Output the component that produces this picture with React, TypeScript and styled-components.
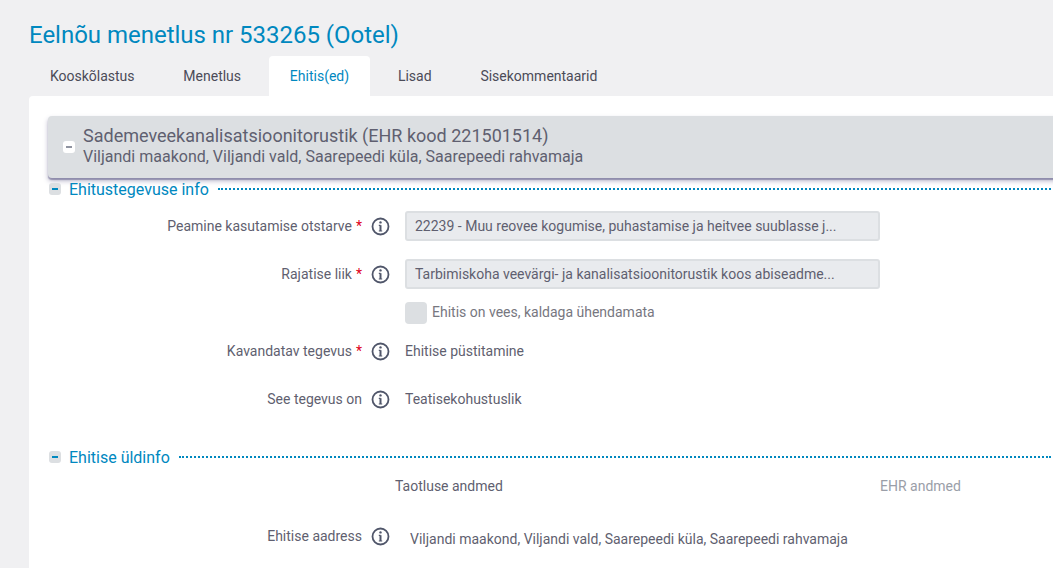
import React from "react";
import styled, { createGlobalStyle } from "styled-components";

const Global = createGlobalStyle`
  html, body { margin: 0; padding: 0; height: 100%; overflow: hidden; background: #f0f0f2; }
  body { font-family: Roboto, "Liberation Sans", sans-serif; color: #5b5b6b; }
`;

const Page = styled.div`
  width: 1053px;
  height: 568px;
  overflow: hidden;
  padding: 20px 0 0 29px;
  box-sizing: border-box;
`;

const Title = styled.h1`
  margin: 0;
  height: 36px;
  font-size: 24px;
  line-height: 30px;
  font-weight: 400;
  color: #0088bf;
  letter-spacing: -0.02px;
`;

const Tabs = styled.nav`
  display: flex;
  gap: 7px;
  height: 40px;
`;

const Tab = styled.div<{ $active?: boolean }>`
  display: flex;
  align-items: center;
  padding: 0 20.9px;
  font-size: 14px;
  border-radius: 4px 4px 0 0;
  color: ${(p) => (p.$active ? "#0088bf" : "#4b4b58")};
  background: ${(p) => (p.$active ? "#fff" : "transparent")};
`;

const Card = styled.main`
  width: 1100px;
  height: 480px;
  background: #fff;
  border-radius: 4px 0 0 0;
  padding: 20px 0 0 19px;
  box-sizing: border-box;
`;

const Panel = styled.header`
  display: flex;
  align-items: center;
  height: 62px;
  gap: 8px;
  padding: 0 0 2px 15px;
  box-sizing: border-box;
  background: #dcdfe2;
  border-radius: 4px 0 0 4px;
  box-shadow: 0 2px 1px rgba(80, 75, 125, 0.45), 0 3px 5px rgba(80, 75, 125, 0.4);
`;

const PanelToggle = styled.span`
  display: flex;
  align-items: center;
  justify-content: center;
  width: 12px;
  height: 12px;
  margin-top: 2px;
  background: #fff;
  border-radius: 3px;
  &::before {
    content: "";
    width: 6px;
    height: 2px;
    background: #8f93a0;
  }
`;

const PanelText = styled.div`
  display: flex;
  flex-direction: column;
`;

const PanelTitle = styled.div`
  font-size: 18px;
  line-height: 22px;
  color: #5f5f70;
`;

const PanelSub = styled.div`
  font-size: 16px;
  line-height: 20px;
  color: #5f5f70;
`;

const Section = styled.div<{ $top: number }>`
  display: flex;
  align-items: center;
  height: 20px;
  width: 1003px;
  margin-top: ${(p) => p.$top}px;
  padding-left: 1px;
  box-sizing: border-box;
`;

const SectionToggle = styled.span`
  display: flex;
  align-items: center;
  justify-content: center;
  width: 12px;
  height: 12px;
  margin-right: 8px;
  background: #dcdfe2;
  border-radius: 3px;
  flex: none;
  &::before {
    content: "";
    width: 6px;
    height: 2px;
    background: #0088bf;
  }
`;

const SectionName = styled.span`
  font-size: 16px;
  color: #0088bf;
  margin-right: 9px;
  white-space: nowrap;
`;

const Dots = styled.span`
  flex: 1;
  border-top: 2px dotted #0088bf;
`;

const Row = styled.div<{ $h: number; $top?: number }>`
  display: grid;
  grid-template-columns: 314px 36px 1fr;
  align-items: center;
  height: ${(p) => p.$h}px;
  margin-top: ${(p) => p.$top ?? 0}px;
`;

const Label = styled.div`
  justify-self: end;
  font-size: 14px;
  color: #5f5f70;
  white-space: nowrap;
`;

const Req = styled.span`
  color: #e0001a;
  margin-left: 4px;
`;

const InfoWrap = styled.span`
  display: flex;
  justify-content: center;
  color: #50566a;
`;

const Input = styled.div`
  width: 475px;
  height: 30px;
  box-sizing: border-box;
  margin-left: 7px;
  padding: 0 8px;
  display: flex;
  align-items: center;
  background: #e9ebee;
  border: 2px solid #dcdfe2;
  border-radius: 3px;
  font-size: 14px;
  color: #5f5f70;
  white-space: nowrap;
`;

const Check = styled.div`
  display: flex;
  align-items: center;
  gap: 5px;
  margin-left: 7px;
  font-size: 14px;
  color: #77777f;
`;

const Box = styled.span`
  width: 22px;
  height: 22px;
  background: #dcdfe2;
  border-radius: 4px;
`;

const CheckText = styled.span`
  margin-top: -2px;
`;

const Value = styled.div<{ $left?: number; $down?: number }>`
  margin-left: ${(p) => p.$left ?? 7}px;
  padding-top: ${(p) => p.$down ?? 0}px;
  font-size: 14px;
  color: #5f5f70;
  white-space: nowrap;
`;

const Columns = styled.div`
  display: flex;
  height: 30px;
  align-items: center;
  font-size: 14px;
  padding-left: 347px;
  margin-top: 4px;
`;

const ColA = styled.span`
  width: 485px;
  color: #5f5f70;
`;

const ColB = styled.span`
  color: #9a9ea8;
`;

const Info = () => (
  <InfoWrap>
    <svg width="19" height="19" viewBox="0 0 19 19" fill="none" stroke="currentColor">
      <circle cx="9.5" cy="9.5" r="8" strokeWidth="1.8" />
      <path d="M9.5 8.2V14" strokeWidth="2" />
      <path d="M7.8 8.4H9.5M7.8 14H11.2" strokeWidth="1.2" />
      <circle cx="9.5" cy="5.4" r="1.2" fill="currentColor" stroke="none" />
    </svg>
  </InfoWrap>
);

export default function App() {
  return (
    <Page>
      <Global />
      <Title>Eelnõu menetlus nr 533265 (Ootel)</Title>
      <Tabs>
        <Tab>Kooskõlastus</Tab>
        <Tab>Menetlus</Tab>
        <Tab $active>Ehitis(ed)</Tab>
        <Tab>Lisad</Tab>
        <Tab>Sisekommentaarid</Tab>
      </Tabs>
      <Card>
        <Panel>
          <PanelToggle />
          <PanelText>
            <PanelTitle>Sademeveekanalisatsioonitorustik (EHR kood 221501514)</PanelTitle>
            <PanelSub>Viljandi maakond, Viljandi vald, Saarepeedi küla, Saarepeedi rahvamaja</PanelSub>
          </PanelText>
        </Panel>
        <Section $top={1}>
          <SectionToggle />
          <SectionName>Ehitustegevuse info</SectionName>
          <Dots />
        </Section>
        <Row $h={48} $top={3}>
          <Label>Peamine kasutamise otstarve<Req>*</Req></Label>
          <Info />
          <Input>22239 - Muu reovee kogumise, puhastamise ja heitvee suublasse j...</Input>
        </Row>
        <Row $h={48}>
          <Label>Rajatise liik<Req>*</Req></Label>
          <Info />
          <Input>Tarbimiskoha veevärgi- ja kanalisatsioonitorustik koos abiseadme...</Input>
        </Row>
        <Row $h={29}>
          <span />
          <span />
          <Check><Box /><CheckText>Ehitis on vees, kaldaga ühendamata</CheckText></Check>
        </Row>
        <Row $h={48}>
          <Label>Kavandatav tegevus<Req>*</Req></Label>
          <Info />
          <Value>Ehitise püstitamine</Value>
        </Row>
        <Row $h={48}>
          <Label>See tegevus on</Label>
          <Info />
          <Value>Teatisekohustuslik</Value>
        </Row>
        <Section $top={24}>
          <SectionToggle />
          <SectionName>Ehitise üldinfo</SectionName>
          <Dots />
        </Section>
        <Columns>
          <ColA>Taotluse andmed</ColA>
          <ColB>EHR andmed</ColB>
        </Columns>
        <Row $h={48} $top={11}>
          <Label>Ehitise aadress</Label>
          <Info />
          <Value $left={12} $down={5}>Viljandi maakond, Viljandi vald, Saarepeedi küla, Saarepeedi rahvamaja</Value>
        </Row>
      </Card>
    </Page>
  );
}
